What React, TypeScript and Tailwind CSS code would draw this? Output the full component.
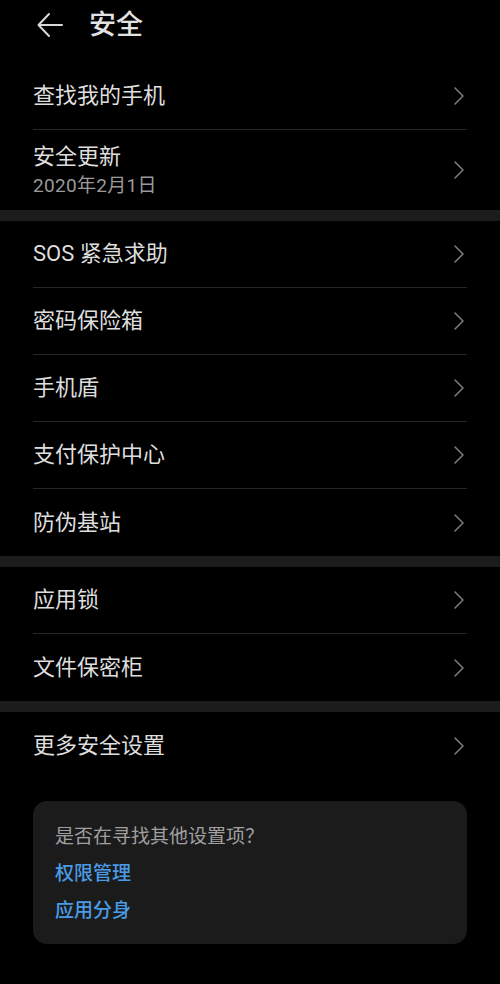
import type { ReactNode } from 'react';

const FONT = '"Roboto", "Noto Sans CJK SC", sans-serif';

function Chevron() {
  return (
    <svg width="12" height="20" viewBox="0 0 12 20" fill="none" className="shrink-0">
      <path d="M2 2 L10 10 L2 18" stroke="#7a7a7a" strokeWidth="1.6" strokeLinecap="round" strokeLinejoin="round" />
    </svg>
  );
}

function Row({ title, sub, last }: { title: string; sub?: string; last?: boolean }) {
  return (
    <div className={`mx-[33px] flex items-center justify-between ${last ? '' : 'border-b border-[#262626]'} ${sub ? 'h-[80px]' : 'h-[67px]'}`}>
      <div className="flex flex-col">
        <span className="text-[22px] leading-[28px] text-[#dedede]">{title}</span>
        {sub && <span className="mt-[3px] text-[19px] leading-[24px] tracking-[0.3px] text-[#9a9a9a]">{sub}</span>}
      </div>
      <div className="mr-[2px]">
        <Chevron />
      </div>
    </div>
  );
}

function Group({ children }: { children: ReactNode }) {
  return <div className="bg-black">{children}</div>;
}

function Band() {
  return <div className="h-[11px] bg-[#1c1c1c]" />;
}

export default function App() {
  return (
    <div className="h-[984px] w-[500px] overflow-hidden bg-black" style={{ fontFamily: FONT }}>
      <div className="flex h-[63px] items-start pl-[36px] pt-[10px]">
        <svg width="28" height="28" viewBox="0 0 28 28" fill="none" className="mt-[1px]">
          <path d="M26 14 H3 M13 3 L2.5 14 L13 25" stroke="#d8d8d8" strokeWidth="2" strokeLinecap="round" strokeLinejoin="round" />
        </svg>
        <span className="ml-[25px] text-[27px] font-medium leading-[30px] text-[#e2e2e2]">安全</span>
      </div>

      <Group>
        <Row title="查找我的手机" />
        <Row title="安全更新" sub="2020年2月1日" last />
      </Group>
      <Band />
      <Group>
        <Row title="SOS 紧急求助" />
        <Row title="密码保险箱" />
        <Row title="手机盾" />
        <Row title="支付保护中心" />
        <Row title="防伪基站" last />
      </Group>
      <Band />
      <Group>
        <Row title="应用锁" />
        <Row title="文件保密柜" last />
      </Group>
      <Band />
      <Group>
        <Row title="更多安全设置" last />
      </Group>

      <div className="mx-[33px] mt-[22px] rounded-[14px] bg-[#1b1b1b] px-[22px] pb-[21px] pt-[24px]">
        <p className="text-[19px] leading-[24px] text-[#a0a0a0]">是否在寻找其他设置项？</p>
        <p className="mt-[13px] text-[19px] font-medium leading-[24px] text-[#4a9be6]">权限管理</p>
        <p className="mt-[13px] text-[19px] font-medium leading-[24px] text-[#4a9be6]">应用分身</p>
      </div>
    </div>
  );
}
